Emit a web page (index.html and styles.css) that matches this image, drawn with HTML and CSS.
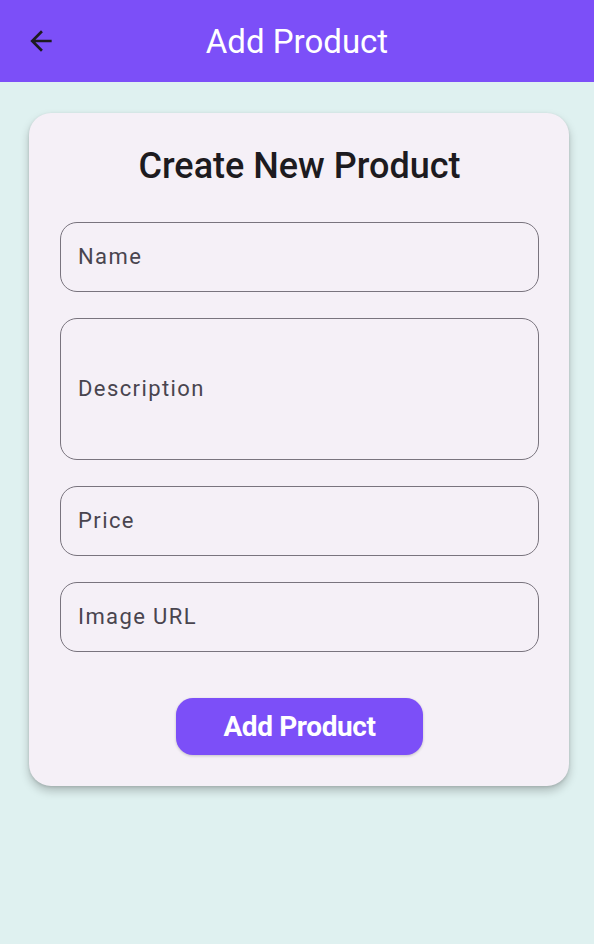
FILE: index.html
```html
<!DOCTYPE html>
<html>
<head>
<meta charset="utf-8">
<link rel="stylesheet" href="styles.css">
</head>
<body>
<header class="appbar">
  <button class="back" aria-label="Back">
    <svg width="32" height="32" viewBox="0 0 24 24"><path d="M20 11H7.83l5.59-5.59L12 4l-8 8 8 8 1.41-1.41L7.83 13H20v-2z" fill="#1d1b20"/></svg>
  </button>
  <h1 class="appbar-title">Add Product</h1>
</header>
<main class="content">
  <section class="card">
    <h2 class="card-title">Create New Product</h2>
    <div class="fields">
      <div class="field"><span class="label">Name</span></div>
      <div class="field field-tall"><span class="label">Description</span></div>
      <div class="field"><span class="label">Price</span></div>
      <div class="field"><span class="label">Image URL</span></div>
    </div>
    <div class="actions">
      <button class="primary">Add Product</button>
    </div>
  </section>
</main>
</body>
</html>
```

FILE: styles.css
```css
* { box-sizing: border-box; }
html, body { margin: 0; padding: 0; }
body {
  background: #dff1f0;
  font-family: Roboto, "Noto Sans", sans-serif;
  width: 594px;
  min-height: 944px;
}
.appbar {
  height: 82px;
  background: #7c4ff8;
  display: flex;
  align-items: center;
  position: relative;
}
.back {
  background: none;
  border: 0;
  padding: 0;
  margin-left: 25px;
  width: 32px;
  height: 32px;
  display: flex;
}
.appbar-title {
  margin: 0;
  position: absolute;
  left: 0;
  right: 0;
  text-align: center;
  font-weight: 400;
  font-size: 33px;
  color: #ffffff;
  pointer-events: none;
}
.content {
  padding: 31px 25px 0 29px;
}
.card {
  background: #f5f0f7;
  border-radius: 22px;
  box-shadow: 0 5px 10px rgba(0, 0, 0, 0.22), 0 1px 3px rgba(0,0,0,0.12);
  padding: 33px 30px 31px 31px;
}
.card-title {
  margin: 0 0 36px;
  text-align: center;
  font-size: 36px;
  line-height: 40px;
  font-weight: 500;
  color: #1d1b20;
}
.fields {
  display: flex;
  flex-direction: column;
  gap: 26px;
}
.field {
  height: 70px;
  border: 1.5px solid #79747e;
  border-radius: 17px;
  display: flex;
  align-items: center;
  padding-left: 17px;
}
.field-tall { height: 142px; }
.label {
  font-size: 22px;
  letter-spacing: 1.4px;
  color: #49454f;
  margin-top: -2px;
}
.actions {
  display: flex;
  justify-content: center;
  margin-top: 46px;
}
.primary {
  width: 247px;
  height: 57px;
  border: 0;
  border-radius: 17px;
  background: #7c4ff8;
  color: #ffffff;
  font-family: Roboto, sans-serif;
  font-size: 28px;
  font-weight: 700;
  letter-spacing: -0.4px;
  box-shadow: 0 1px 3px rgba(0,0,0,0.2);
}
```
